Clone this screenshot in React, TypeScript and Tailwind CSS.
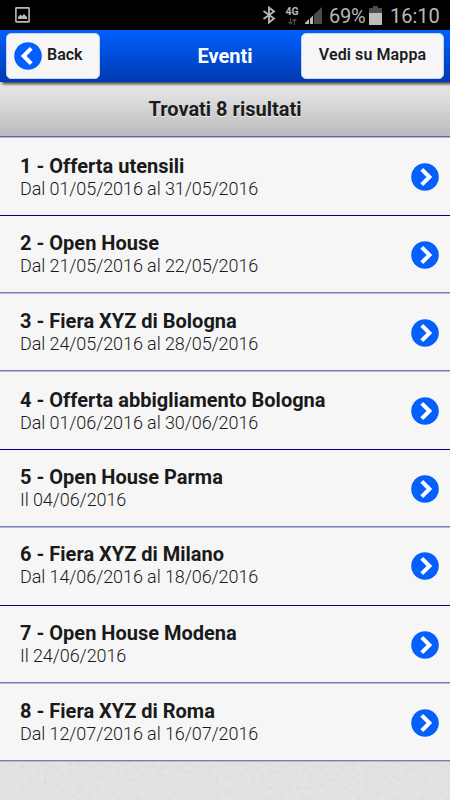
import React from 'react';

interface EventItem {
  id: number;
  title: string;
  date: string;
  rowClass: string;
}

const softLine = 'h-[78px] border-b border-[#b3b9dc] shadow-[inset_0_-1px_0_#7681bc]';
const darkLine = 'h-[78px] border-b border-[#00008f]';

const events: EventItem[] = [
  { id: 1, title: 'Offerta utensili', date: 'Dal 01/05/2016 al 31/05/2016', rowClass: darkLine },
  { id: 2, title: 'Open House', date: 'Dal 21/05/2016 al 22/05/2016', rowClass: softLine },
  { id: 3, title: 'Fiera XYZ di Bologna', date: 'Dal 24/05/2016 al 28/05/2016', rowClass: softLine },
  { id: 4, title: 'Offerta abbigliamento Bologna', date: 'Dal 01/06/2016 al 30/06/2016', rowClass: darkLine },
  { id: 5, title: 'Open House Parma', date: 'Il 04/06/2016', rowClass: softLine },
  { id: 6, title: 'Fiera XYZ di Milano', date: 'Dal 14/06/2016 al 18/06/2016', rowClass: `${darkLine} pb-[2px]` },
  { id: 7, title: 'Open House Modena', date: 'Il 24/06/2016', rowClass: softLine },
  { id: 8, title: 'Fiera XYZ di Roma', date: 'Dal 12/07/2016 al 16/07/2016', rowClass: softLine },
];

const RoundArrow: React.FC<{ left?: boolean }> = ({ left }) => (
  <svg className={left ? 'size-7 shrink-0 rotate-180' : 'size-7 shrink-0'} viewBox="0 0 28 28">
    <circle cx="14" cy="14" r="13.8" fill="#0560fb" />
    <path d="M10.8 6.4 L18.4 14 L10.8 21.6" fill="none" stroke="#fff" strokeWidth="4" />
  </svg>
);

const StatusBar: React.FC = () => (
  <div className="flex h-[30px] items-center bg-black pl-[15px] text-[#b9b9b9]">
    <svg className="h-4 w-[15px]" viewBox="0 0 15 16" fill="none">
      <rect x="0.9" y="0.9" width="13.2" height="14" rx="0.5" stroke="currentColor" strokeWidth="1.6" />
      <path d="M3 12 V10 L5.5 7.5 L7 9 L9 7 L12 10 V12 Z" fill="currentColor" />
    </svg>
    <svg className="ml-[232px] h-[18px] w-[14px]" viewBox="0 0 14 18" fill="none">
      <path d="M1.5 5 L12 12.5 L7 16.5 V1.5 L12 5.5 L1.5 13" stroke="currentColor" strokeWidth="1.8" />
    </svg>
    <div className="ml-[8px] flex w-4 flex-col items-center pt-[2px]">
      <span className="text-[10.5px] leading-[10px] font-bold">4G</span>
      <svg className="mt-px h-[7px] w-[9px]" viewBox="0 0 9 7" fill="none" stroke="#4c4c4c">
        <path d="M2.5 0 V6 M0.5 4 L2.5 6 L4.5 4 M6.5 7 V1 M4.5 3 L6.5 1 L8.5 3" strokeWidth="1.2" />
      </svg>
    </div>
    <svg className="ml-[5px] h-[17px] w-[17px]" viewBox="0 0 17 17">
      <path d="M0 17 V16 L4 12 V17 Z M5 17 V11.5 L8 8.5 V17 Z" fill="#bdbdbd" />
      <path d="M9 17 V7.5 L17 0 V17 Z" fill="#4c4c4c" />
    </svg>
    <span className="ml-[7px] w-[38px] pt-[2px] text-[20px] leading-[30px] tracking-[-0.2px] whitespace-nowrap">69%</span>
    <svg className="ml-[2px] h-[19px] w-[13px]" viewBox="0 0 13 19">
      <path d="M4 0 H9 V2 H13 V7 H0 V2 H4 Z" fill="#4c4c4c" />
      <path d="M0 7 H13 V19 H0 Z" fill="#bdbdbd" />
    </svg>
    <span className="ml-[8px] pt-[2px] text-[20px] leading-[30px]">16:10</span>
  </div>
);

const Header: React.FC = () => (
  <header className="relative z-10 grid h-[52px] grid-cols-[1fr_auto_1fr] items-center bg-linear-to-b from-[#0060ff] to-[#003ab0] px-[6px] shadow-[2px_2px_3px_rgba(0,0,0,0.75)]">
    <button className="flex h-[46px] w-[94px] items-center rounded-[5px] border border-[#c5d3f2] bg-[#f6f6f6] pl-[7px]">
      <RoundArrow left />
      <span className="ml-[5px] -mt-[3px] text-[16px] font-semibold text-[#1c1c1c]">Back</span>
    </button>
    <h1 className="text-[20px] font-bold text-white">Eventi</h1>
    <button className="h-[46px] w-[143px] justify-self-end rounded-[5px] border border-[#c5d3f2] bg-[#f6f6f6] pb-[3px] text-[16px] font-semibold tracking-[0.1px] whitespace-nowrap text-[#1c1c1c]">
      Vedi su Mappa
    </button>
  </header>
);

const EventRow: React.FC<{ event: EventItem }> = ({ event }) => (
  <li className={`${event.rowClass} flex items-center justify-between bg-[#f6f6f6] pr-[11px] pl-5 text-[#1a1a1a]`}>
    <div className={event.id === 1 || event.id === 4 ? 'pt-[2px]' : ''}>
      <h3 className="text-[20px] leading-[22px] font-bold">{event.id} - {event.title}</h3>
      <p className="text-[18px] leading-[23px] font-light tracking-[-0.09px]">{event.date}</p>
    </div>
    <RoundArrow />
  </li>
);

export default function App() {
  return (
    <div className="flex h-[800px] w-[450px] flex-col overflow-hidden bg-[#e6e5e6] font-['Roboto','Liberation_Sans',sans-serif]">
      <StatusBar />
      <Header />
      <h2 className="h-[56px] shrink-0 border-b border-[#b3b9dc] bg-linear-to-b from-[#ececec] to-[#bababa] text-center text-[20px] leading-[55px] font-bold text-[#1c1c1c] shadow-[inset_0_-1px_0_#5c66ac] [text-shadow:0_1px_0_#eee]">
        Trovati 8 risultati
      </h2>
      <ul className="shrink-0">
        {events.map((event) => (
          <EventRow key={event.id} event={event} />
        ))}
      </ul>
      <svg className="w-full flex-1 opacity-15">
        <filter id="grain">
          <feTurbulence type="fractalNoise" baseFrequency="0.25" numOctaves="2" seed="4" />
          <feColorMatrix type="saturate" values="0" />
        </filter>
        <rect width="100%" height="100%" filter="url(#grain)" />
      </svg>
    </div>
  );
}
